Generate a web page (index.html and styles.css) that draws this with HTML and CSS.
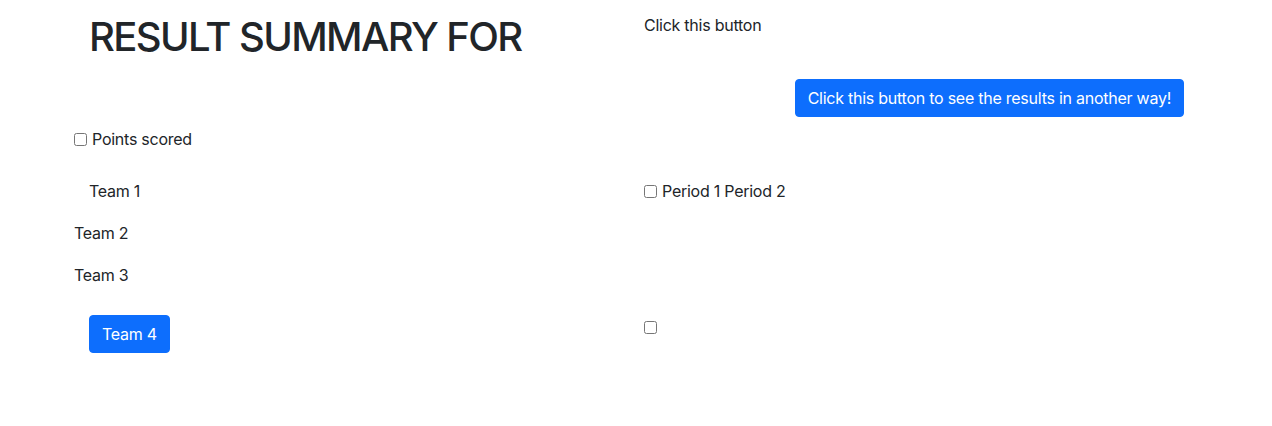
FILE: index.html
```html
<!DOCTYPE html>
<html lang="en">
<head>
<meta charset="utf-8">
<title>Result summary</title>
<link rel="stylesheet" href="styles.css">
</head>
<body>
<div class="container">
  <div class="row row-top">
    <div class="col"><h1 class="title">RESULT SUMMARY FOR</h1></div>
    <div class="col"><p class="hint">Click this button</p></div>
  </div>
  <div class="actions">
    <button class="btn" type="button">Click this button to see the results in another way!</button>
  </div>
  <label class="check check-points"><input type="checkbox" class="box">Points scored</label>
  <div class="row row-team1">
    <div class="col">Team 1</div>
    <div class="col"><label class="check"><input type="checkbox" class="box">Period 1 Period 2</label></div>
  </div>
  <div class="team-plain">Team 2</div>
  <div class="team-plain">Team 3</div>
  <div class="row row-team4">
    <div class="col"><button class="btn" type="button">Team 4</button></div>
    <div class="col"><input type="checkbox" class="box box-lone"></div>
  </div>
</div>
</body>
</html>
```
FILE: styles.css
```css
html, body {
  margin: 0;
  padding: 0;
  background: #fff;
}
body {
  font-family: Inter, "Liberation Sans", Arial, sans-serif;
  font-size: 16px;
  line-height: 24px;
  letter-spacing: -0.25px;
  color: #212529;
}
.container {
  width: 1110px;
  margin-left: 74px;
  padding-top: 13px;
}
.row {
  display: flex;
}
.col {
  width: 555px;
  padding: 0 15px;
  box-sizing: border-box;
}
.title {
  margin: 0 0 8px;
  font-size: 40px;
  line-height: 48px;
  font-weight: 500;
  letter-spacing: -1.6px;
}
.hint {
  margin: 0 0 16px;
}
.actions {
  margin-top: 10px;
  display: flex;
  justify-content: flex-end;
}
.btn {
  font-family: inherit;
  font-size: 16px;
  line-height: 24px;
  letter-spacing: inherit;
  padding: 6px 12px;
  border: 1px solid #0d6efd;
  border-radius: 4px;
  background: #0d6efd;
  color: #fff;
  cursor: pointer;
}
.check {
  display: flex;
  align-items: center;
  height: 24px;
}
.check-points {
  margin-top: 10px;
}
.box {
  width: 13px;
  height: 13px;
  margin: 0 5px 0 0;
}
.row-team1 {
  margin-top: 28px;
  height: 24px;
  align-items: center;
}
.team-plain {
  margin-top: 18px;
}
.row-team4 {
  margin-top: 28px;
}
.box-lone {
  margin-top: 6px;
}
```
